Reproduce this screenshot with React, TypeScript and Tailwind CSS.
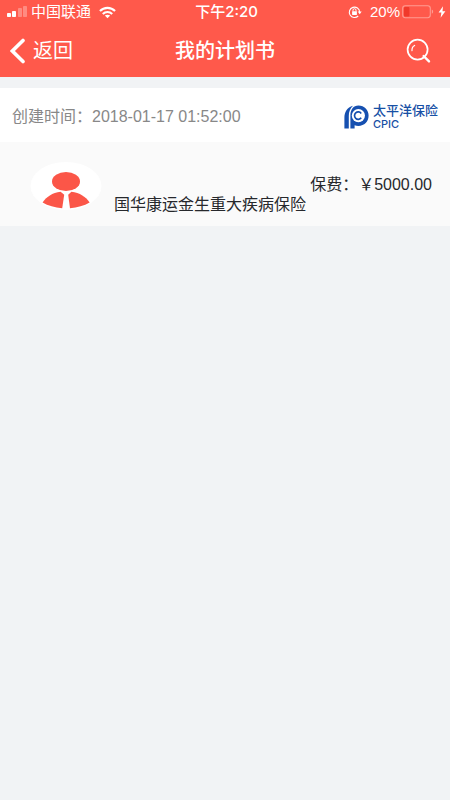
type Plan = {
  id: number;
  createdAt: string;
  name: string;
  premium: string;
};

const plans: Plan[] = [
  {
    id: 1,
    createdAt: "2018-01-17 01:52:00",
    name: "国华康运金生重大疾病保险",
    premium: "5000.00",
  },
];

function SignalIcon() {
  return (
    <svg width="20" height="12" viewBox="0 0 20 12" fill="#fff" aria-hidden="true">
      <rect x="0" y="7" width="4" height="4" rx="0.8" />
      <rect x="5" y="5" width="4" height="6" rx="0.8" />
      <rect x="11" y="2" width="4" height="9" rx="0.8" opacity="0.3" />
      <rect x="16" y="0" width="4" height="11" rx="0.8" opacity="0.3" />
    </svg>
  );
}

function WifiIcon() {
  return (
    <svg width="17" height="13" viewBox="0 0 18 13" fill="none" stroke="#fff" strokeWidth="2.2" aria-hidden="true">
      <path d="M1 5 C5.4 0.5 12.6 0.5 17 5" />
      <path d="M4 8 C6.8 5.2 11.2 5.2 14 8" />
      <path d="M9 12.5 L6.2 9.8 C7.8 8.4 10.2 8.4 11.8 9.8 Z" fill="#fff" stroke="none" />
    </svg>
  );
}

function RotationLockIcon() {
  return (
    <svg width="14" height="14" viewBox="0 0 14 14" fill="none" stroke="#fff" aria-hidden="true">
      <path d="M10.2 11 A5.2 5.2 0 1 1 11.7 7" strokeWidth="1.1" />
      <path d="M9.7 6.6 H13.7 L11.7 9.2 Z" fill="#fff" stroke="none" />
      <rect x="4.1" y="6.2" width="4.8" height="3.7" rx="0.4" fill="#fff" stroke="none" />
      <path d="M5 6.4 V5.2 a1.5 1.5 0 0 1 3 0 V6.4" strokeWidth="1" />
    </svg>
  );
}

function BatteryIcon() {
  return (
    <svg width="32" height="14" viewBox="0 0 32 14" aria-hidden="true">
      <rect x="0.7" y="0.7" width="27.6" height="12" rx="2.6" fill="none" stroke="#ff9c92" strokeWidth="1.1" />
      <rect x="2" y="2" width="5.4" height="9.4" rx="1" fill="#f0392b" />
      <path d="M29.8 4.6 C31.6 5.2 31.6 8.2 29.8 8.8 Z" fill="#ff9c92" />
    </svg>
  );
}

function BoltIcon() {
  return (
    <svg width="8" height="12" viewBox="0 0 8 12" fill="#fff" aria-hidden="true">
      <path d="M5 0.3 L0.6 6.5 H3.4 L2.6 11.7 L7.4 5.2 H4.5 Z" />
    </svg>
  );
}

function SearchIcon() {
  return (
    <svg width="26" height="26" viewBox="0 0 26 26" fill="none" stroke="#fff" strokeLinecap="round" aria-hidden="true">
      <circle cx="11.6" cy="11.6" r="10" strokeWidth="1.7" />
      <path d="M6 12.6 C5.8 10.4 6.8 8.4 8.6 7.4" strokeWidth="1.2" />
      <path d="M17.6 18 L23 23.4" strokeWidth="2.4" />
    </svg>
  );
}

function CpicLogo() {
  return (
    <div className="flex items-center gap-1 text-[#1750a5]">
      <svg width="25" height="24" viewBox="0 0 25 24" aria-hidden="true">
        {/* outer sweep, then the bowl and stem of the p */}
        <path
          d="M0.4 23.6 V13 C0.4 7 3 2.6 9 0.8 C6 3.6 4.8 7 4.8 11 V23.6 Z"
          fill="#1650b0"
        />
        <path
          d="M6.4 23.6 V10.4 C6.4 4.4 9.4 0.4 14.4 0.4 C20.4 0.4 24.6 4.8 24.6 10.6 C24.6 16.6 20.4 21 14.4 21 C13 21 11.8 20.8 10.6 20.2 V23.6 Z"
          fill="#1650b0"
        />
        <circle cx="14.4" cy="10.6" r="6.6" fill="#fff" />
        <path d="M17.2 8.4 A3.7 3.7 0 1 0 17.2 12.8" fill="none" stroke="#1650b0" strokeWidth="1.7" />
      </svg>
      <div className="flex flex-col">
        <span className="text-[13px] leading-[14px] font-medium">太平洋保险</span>
        <span className="font-['Inter','Liberation_Sans',sans-serif] text-[11px] leading-3 font-medium">
          CPIC
        </span>
      </div>
    </div>
  );
}

function Avatar() {
  return (
    <svg width="72" height="48" viewBox="0 0 72 48" className="shrink-0" aria-hidden="true">
      <ellipse cx="36" cy="24" rx="35.5" ry="24" fill="#fff" />
      <ellipse cx="36" cy="19.5" rx="14" ry="9.6" fill="#fb5648" />
      <path d="M30.6 29.8 L34.2 32.8 L32.2 46.2 C24.8 45.6 18 43.6 12.6 40.4 C16.2 35 22.4 30.8 30.6 29.8 Z" fill="#fb5648" />
      <path d="M41.4 29.8 L38.2 32.8 L40 46.2 C47.4 45.6 54.2 43.6 59.6 40.4 C56 35 49.8 30.8 41.4 29.8 Z" fill="#fb5648" />
    </svg>
  );
}

function StatusBar() {
  return (
    <div className="grid h-6 grid-cols-[1fr_auto_1fr] items-center pr-1 pl-[7px] text-[15px] leading-6">
      <div className="flex items-center">
        <SignalIcon />
        <span className="mr-2 ml-1">中国联通</span>
        <WifiIcon />
      </div>
      <span className="font-['Inter','Noto_Sans_CJK_SC',sans-serif] font-medium">下午2:20</span>
      <div className="flex items-center justify-end">
        <RotationLockIcon />
        <span className="mr-0.5 ml-2">20%</span>
        <BatteryIcon />
        <span className="ml-1">
          <BoltIcon />
        </span>
      </div>
    </div>
  );
}

function NavBar() {
  return (
    <div className="grid h-[53px] grid-cols-[1fr_auto_1fr] items-center px-2.5">
      <button type="button" className="flex items-center gap-2 justify-self-start text-xl">
        <svg width="15" height="26" viewBox="0 0 15 26" fill="none" stroke="#fff" strokeWidth="3.6" strokeLinecap="round" aria-hidden="true">
          <path d="M13 2.4 L2.4 13 L13 23.6" />
        </svg>
        返回
      </button>
      <h1 className="text-xl font-medium">我的计划书</h1>
      <button type="button" aria-label="搜索" className="mr-2 justify-self-end">
        <SearchIcon />
      </button>
    </div>
  );
}

function PlanCard({ plan }: { plan: Plan }) {
  return (
    <li>
      <div className="flex h-[54px] items-center justify-between bg-white px-3">
        <p className="pt-1 text-base text-[#888]">创建时间：{plan.createdAt}</p>
        <div className="pt-1">
          <CpicLogo />
        </div>
      </div>
      <div className="flex h-[84px] items-start bg-[#fafafa] pt-5 pr-[18px] pl-[30px] text-[#26282c]">
        <Avatar />
        {/* price sits one line above the product name */}
        <div className="flex min-w-0 flex-1 flex-col pt-[13px] pl-3">
          <p className="self-end text-base leading-5">保费：￥{plan.premium}</p>
          <p className="text-base leading-5 whitespace-nowrap">{plan.name}</p>
        </div>
      </div>
    </li>
  );
}

export default function App() {
  return (
    <div className="min-h-screen bg-[#f1f3f5] font-['Liberation_Sans','Noto_Sans_CJK_SC',sans-serif]">
      <header className="bg-[#ff594b] text-white">
        <StatusBar />
        <NavBar />
      </header>
      <main className="pt-[11px]">
        <ul>
          {plans.map((plan) => (
            <PlanCard key={plan.id} plan={plan} />
          ))}
        </ul>
      </main>
    </div>
  );
}
